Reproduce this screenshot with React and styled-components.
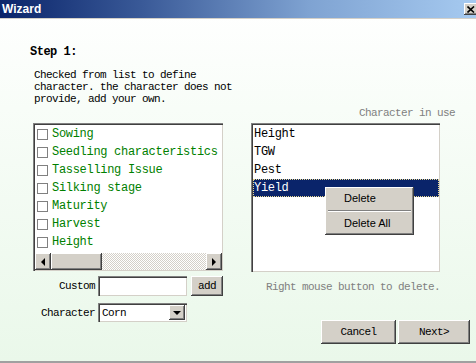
import React from 'react'
import styled, { createGlobalStyle } from 'styled-components'

const GlobalStyle = createGlobalStyle`
  html, body { margin: 0; padding: 0; }
  body { font-family: "Liberation Mono", monospace; overflow: hidden; }
`

const raised = `
  background: #d4d0c8;
  box-shadow: inset -1px -1px #404040, inset 1px 1px #ffffff, inset -2px -2px #808080, inset 2px 2px #d4d0c8;
`
const sunken = `
  background: #fff;
  box-shadow: inset 1px 1px #808080, inset 2px 2px #404040, inset -1px -1px #d4d0c8;
`

const Window = styled.div`
  width: 476px;
  height: 363px;
  box-sizing: border-box;
  display: flex;
  flex-direction: column;
  background: linear-gradient(180deg, #ffffff 0%, #f8fdf8 30%, #eaf8ea 100%);
  border-bottom: 2px solid #a0a0a0;
  overflow: hidden;
`

const TitleBar = styled.div`
  height: 18px;
  flex: none;
  display: flex;
  align-items: center;
  justify-content: space-between;
  padding-left: 2px;
  background: linear-gradient(90deg, #0a246a 0%, #3a5a98 30%, #7fa3d2 65%, #a6caf0 100%);
  border-bottom: 1px solid #d4d0c8;
  overflow: hidden;
`

const Title = styled.span`
  font-family: "Liberation Sans", Arial, sans-serif;
  font-weight: bold;
  font-size: 12px;
  color: #fff;
`

const CloseBox = styled.div`
  ${raised}
  width: 16px;
  height: 12px;
  margin-right: -4px;
  display: flex;
  align-items: center;
  padding-left: 3px;
  box-sizing: border-box;
`

const Body = styled.div`
  flex: 1;
  display: flex;
  flex-direction: column;
  padding-left: 30px;
`

const Step = styled.div`
  margin-top: 26px;
  font-size: 12px;
  font-weight: bold;
  letter-spacing: -0.5px;
  line-height: 14px;
`

const Small = styled.div`
  font-size: 11px;
  letter-spacing: -0.6px;
  line-height: 12px;
  color: ${p => p.$muted ? '#808080' : '#000'};
`

const Desc = styled(Small)`
  margin-top: 10px;
  padding-left: 4px;
`

const Columns = styled.div`
  display: flex;
  margin-top: 2px;
  margin-left: 3px;
  gap: 28px;
`

const LeftCol = styled.div`
  width: 190px;
  padding-top: 16px;
  display: flex;
  flex-direction: column;
`

const RightCol = styled.div`
  width: 221px;
  display: flex;
  flex-direction: column;
`

const ListBox = styled.div`
  ${sunken}
  position: relative;
  box-sizing: border-box;
  width: ${p => p.$w}px;
  height: ${p => p.$h}px;
  padding: 2px 1px 1px 2px;
  display: flex;
  flex-direction: column;
`

const Row = styled.div`
  height: 18px;
  flex: none;
  display: flex;
  align-items: center;
  gap: 4px;
  padding-left: ${p => p.$pad}px;
  font-size: 12px;
  letter-spacing: -0.3px;
  white-space: nowrap;
  color: ${p => p.$sel ? '#fff' : p.$green ? '#008000' : '#000'};
  background: ${p => p.$sel ? '#0a246a' : 'transparent'};
  outline: ${p => p.$sel ? '1px dotted #e8d890' : 'none'};
  outline-offset: -1px;
`

const Check = styled.span`
  width: 11px;
  height: 11px;
  box-sizing: border-box;
  border: 1px solid #808080;
  background: #fff;
  flex: none;
`

const HScroll = styled.div`
  margin-top: auto;
  height: 17px;
  display: flex;
`

const ScrollBtn = styled.div`
  ${raised}
  width: ${p => p.$w}px;
  flex: none;
  display: flex;
  align-items: center;
  justify-content: center;
`

const Track = styled.div`
  flex: 1;
  background: repeating-conic-gradient(#d4d0c8 0 25%, #ffffff 0 50%) 0 0 / 2px 2px;
`

const Tri = styled.span`
  width: 0;
  height: 0;
  border-style: solid;
  ${p => p.$dir === 'left' && 'border-width: 4px 4px 4px 0; border-color: transparent #000 transparent transparent;'}
  ${p => p.$dir === 'right' && 'border-width: 4px 0 4px 4px; border-color: transparent transparent transparent #000;'}
  ${p => p.$dir === 'down' && 'border-width: 4px 4px 0 4px; border-color: #000 transparent transparent transparent; margin-left: -1px;'}
`

const FieldRow = styled.div`
  display: flex;
  align-items: center;
  margin-top: ${p => p.$mt}px;
`

const FieldLabel = styled(Small)`
  width: 62px;
  margin-right: 3px;
  text-align: right;
`

const TextInput = styled.div`
  ${sunken}
  width: 89px;
  height: 20px;
  box-sizing: border-box;
`

const Button = styled.div`
  ${raised}
  width: ${p => p.$w}px;
  height: ${p => p.$h}px;
  box-sizing: border-box;
  display: flex;
  align-items: center;
  justify-content: center;
  font-size: 11px;
  letter-spacing: -0.6px;
`

const Select = styled.div`
  ${sunken}
  width: 89px;
  height: 19px;
  box-sizing: border-box;
  display: flex;
  align-items: center;
  justify-content: space-between;
  padding: 2px 2px 2px 4px;
  font-size: 11px;
  letter-spacing: -0.6px;
`

const DropBtn = styled(ScrollBtn)`
  height: 15px;
`

const RightLabel = styled(Small)`
  text-align: right;
  padding-right: 17px;
  margin-bottom: 4px;
`

const Hint = styled(Small)`
  margin-top: 9px;
  padding-left: 15px;
`

const Menu = styled.div`
  ${raised}
  position: absolute;
  left: 74px;
  top: 64px;
  width: 89px;
  height: 48px;
  box-sizing: border-box;
  padding-top: 3px;
  font-family: "Liberation Sans", Arial, sans-serif;
  font-size: 11px;
`

const MenuItem = styled.div`
  height: 17px;
  line-height: 17px;
  padding-left: 19px;
`

const MenuSep = styled.div`
  margin: 3px 3px;
  border-top: 1px solid #808080;
  border-bottom: 1px solid #ffffff;
`

const Footer = styled.div`
  display: flex;
  justify-content: flex-end;
  gap: 2px;
  margin-top: 27px;
  margin-right: 2px;
`

const options = ['Sowing', 'Seedling characteristics', 'Tasselling Issue', 'Silking stage', 'Maturity', 'Harvest', 'Height']
const inUse = ['Height', 'TGW', 'Pest', 'Yield']

export default function App() {
  return (
    <Window>
      <GlobalStyle />
      <TitleBar>
        <Title>Wizard</Title>
        <CloseBox>
          <svg width="8" height="7" viewBox="0 0 8 7">
            <path d="M0.5 0.5 L7 6.5 M7 0.5 L0.5 6.5" stroke="#000" strokeWidth="1.6" />
          </svg>
        </CloseBox>
      </TitleBar>
      <Body>
        <Step>Step 1:</Step>
        <Desc>
          Checked from list to define<br />
          character. the character does not<br />
          provide, add your own.
        </Desc>
        <Columns>
          <LeftCol>
            <ListBox $w={190} $h={148}>
              {options.map(o => (
                <Row key={o} $green $pad={2}>
                  <Check />
                  {o}
                </Row>
              ))}
              <HScroll>
                <ScrollBtn $w={16}><Tri $dir="left" /></ScrollBtn>
                <ScrollBtn $w={51} />
                <Track />
                <ScrollBtn $w={16}><Tri $dir="right" /></ScrollBtn>
              </HScroll>
            </ListBox>
            <FieldRow $mt={5}>
              <FieldLabel>Custom</FieldLabel>
              <TextInput />
              <Button $w={32} $h={20} style={{ marginLeft: 4 }}>add</Button>
            </FieldRow>
            <FieldRow $mt={7}>
              <FieldLabel>Character</FieldLabel>
              <Select>
                Corn
                <DropBtn $w={16}><Tri $dir="down" /></DropBtn>
              </Select>
            </FieldRow>
          </LeftCol>
          <RightCol>
            <RightLabel $muted>Character in use</RightLabel>
            <ListBox $w={189} $h={149}>
              {inUse.map(o => (
                <Row key={o} $pad={1} $sel={o === 'Yield'}>{o}</Row>
              ))}
              <Menu>
                <MenuItem>Delete</MenuItem>
                <MenuSep />
                <MenuItem>Delete All</MenuItem>
              </Menu>
            </ListBox>
            <Hint $muted>Right mouse button to delete.</Hint>
            <Footer>
              <Button $w={75} $h={24}>Cancel</Button>
              <Button $w={72} $h={24}>Next&gt;</Button>
            </Footer>
          </RightCol>
        </Columns>
      </Body>
    </Window>
  )
}
